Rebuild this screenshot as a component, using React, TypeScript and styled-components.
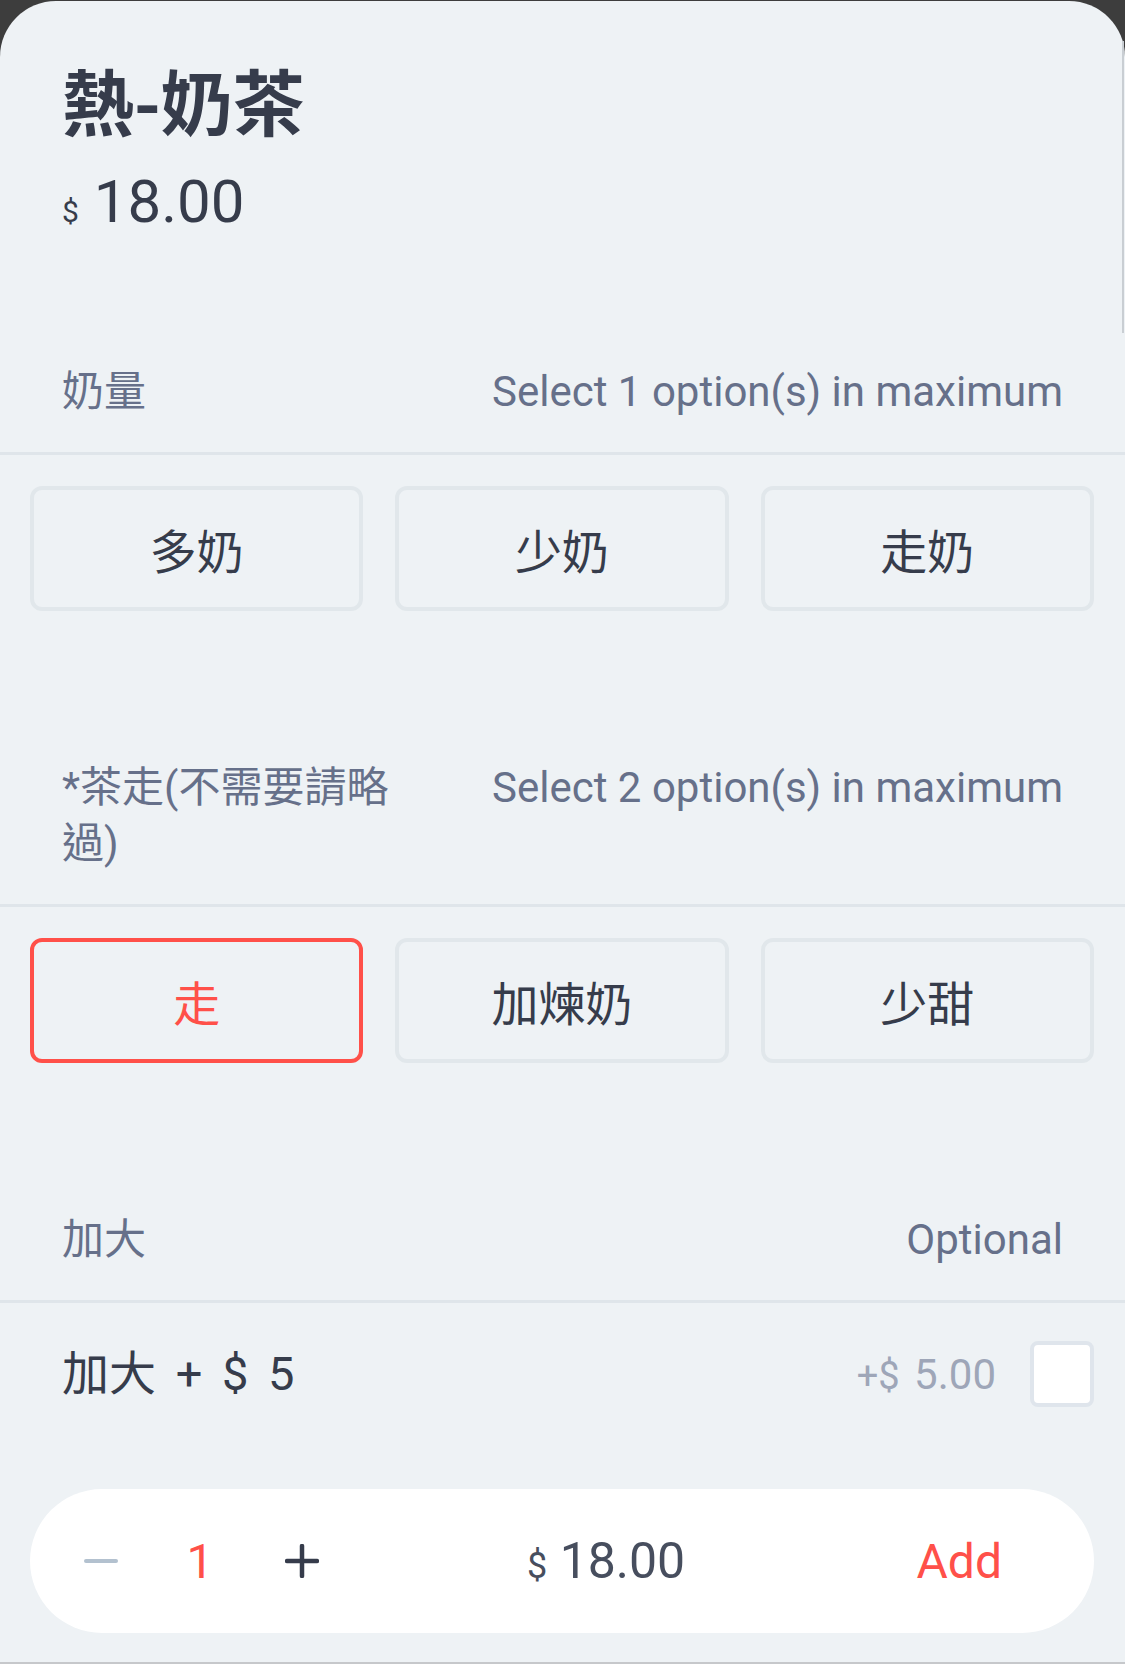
import styled, { createGlobalStyle } from "styled-components";

const GlobalStyle = createGlobalStyle`
  html, body {
    margin: 0;
    padding: 0;
    background: #3d3d3d;
    overflow: hidden;
  }
  * {
    box-sizing: border-box;
  }
`;

const FONT = `Roboto, "Noto Sans CJK TC", "Noto Sans", sans-serif`;

const Sheet = styled.div`
  position: relative;
  margin-top: 1px;
  height: 1663px;
  background: #eef2f5;
  border-radius: 56px 56px 0 0;
  border-bottom: 2px solid #c6c8cb;
  font-family: ${FONT};
  color: #363c4b;
  display: flex;
  flex-direction: column;
`;

// thin scroll indicator on the right edge
const ScrollThumb = styled.div`
  position: absolute;
  top: 40px;
  right: 1px;
  width: 2px;
  height: 292px;
  background: #c9ced3;
`;

const Header = styled.div`
  padding: 55px 62px 0;
`;

const Title = styled.h1`
  margin: 0;
  font-size: 72px;
  line-height: 86px;
  font-weight: 700;
  font-family: "Noto Sans CJK TC", Roboto, sans-serif;
`;

const Price = styled.div`
  margin-top: 24px;
  line-height: 72px;
  font-size: 60px;
`;

const Currency = styled.span<{ size: number }>`
  font-size: ${(p) => p.size}px;
`;

const Section = styled.section`
  margin-top: 116px;
  padding-bottom: 33px;
`;

const GroupHead = styled.div`
  display: flex;
  justify-content: space-between;
  align-items: flex-start;
  padding: 0 62px 32px;
  border-bottom: 3px solid #dfe5ea;
  font-size: 42px;
  line-height: 56px;
  color: #66708a;
`;

const GroupName = styled.div`
  max-width: 340px;
`;

const GroupRule = styled.div`
  white-space: nowrap;
  text-align: right;
`;

const Options = styled.div`
  display: grid;
  grid-template-columns: repeat(3, 1fr);
  gap: 32px;
  padding: 31px 31px 0 30px;
`;

const Option = styled.button<{ $active?: boolean }>`
  height: 125px;
  border: 4px solid ${(p) => (p.$active ? "#ff5049" : "#e1e7eb")};
  border-radius: 12px;
  background: transparent;
  font-family: ${FONT};
  font-size: 47px;
  color: ${(p) => (p.$active ? "#ff5049" : "#363c4b")};
  padding: 0;
`;

const ExtraRow = styled.div`
  display: flex;
  align-items: center;
  padding: 38px 31px 0 62px;
`;

const ExtraName = styled.div`
  flex: 1;
  font-size: 47px;
  line-height: 66px;
  word-spacing: 8px;
`;

const ExtraPrice = styled.div`
  font-size: 42px;
  color: #9ea6b8;
  margin-right: 34px;
  word-spacing: 4px;
`;

const Checkbox = styled.div`
  width: 64px;
  height: 66px;
  border: 4px solid #dfe5ec;
  border-radius: 8px;
  background: #ffffff;
`;

const Footer = styled.div`
  margin: auto 31px 29px 30px;
  height: 144px;
  border-radius: 72px;
  background: #ffffff;
  display: flex;
  align-items: center;
  padding: 0 92px 0 54px;
`;

const Stepper = styled.div`
  display: flex;
  align-items: center;
`;

const Qty = styled.span`
  width: 60px;
  margin: 0 55px 0 52px;
  text-align: center;
  font-size: 48px;
  color: #ff5049;
`;

const Total = styled.div`
  margin-left: 208px;
  font-size: 50px;
  color: #474e5e;
`;

const AddButton = styled.button`
  margin-left: auto;
  border: none;
  background: none;
  padding: 0;
  font-family: ${FONT};
  font-size: 48px;
  color: #ff5049;
`;

function MinusIcon() {
  return (
    <svg width="34" height="34" viewBox="0 0 34 34">
      <line x1="2" y1="17" x2="32" y2="17" stroke="#b3c1cf" strokeWidth="4" strokeLinecap="round" />
    </svg>
  );
}

function PlusIcon() {
  return (
    <svg width="34" height="34" viewBox="0 0 34 34">
      <line x1="2" y1="17" x2="32" y2="17" stroke="#363c4b" strokeWidth="4.5" strokeLinecap="round" />
      <line x1="17" y1="2" x2="17" y2="32" stroke="#363c4b" strokeWidth="4.5" strokeLinecap="round" />
    </svg>
  );
}

const groups = [
  {
    name: "奶量",
    rule: "Select 1 option(s) in maximum",
    options: ["多奶", "少奶", "走奶"],
    selected: -1,
  },
  {
    name: "*茶走(不需要請略過)",
    rule: "Select 2 option(s) in maximum",
    options: ["走", "加煉奶", "少甜"],
    selected: 0,
  },
];

export default function App() {
  return (
    <>
      <GlobalStyle />
      <Sheet>
        <ScrollThumb />
        <Header>
          <Title>熱-奶茶</Title>
          <Price>
            <Currency size={30}>$</Currency> 18.00
          </Price>
        </Header>

        {groups.map((g) => (
          <Section key={g.name}>
            <GroupHead>
              <GroupName>{g.name}</GroupName>
              <GroupRule>{g.rule}</GroupRule>
            </GroupHead>
            <Options>
              {g.options.map((o, i) => (
                <Option key={o} $active={i === g.selected}>
                  {o}
                </Option>
              ))}
            </Options>
          </Section>
        ))}

        <Section>
          <GroupHead>
            <GroupName>加大</GroupName>
            <GroupRule>Optional</GroupRule>
          </GroupHead>
          <ExtraRow>
            <ExtraName>加大 + $ 5</ExtraName>
            <ExtraPrice>
              <Currency size={38}>+$</Currency> 5.00
            </ExtraPrice>
            <Checkbox />
          </ExtraRow>
        </Section>

        <Footer>
          <Stepper>
            <MinusIcon />
            <Qty>1</Qty>
            <PlusIcon />
          </Stepper>
          <Total>
            <Currency size={36}>$</Currency> 18.00
          </Total>
          <AddButton>Add</AddButton>
        </Footer>
      </Sheet>
    </>
  );
}
